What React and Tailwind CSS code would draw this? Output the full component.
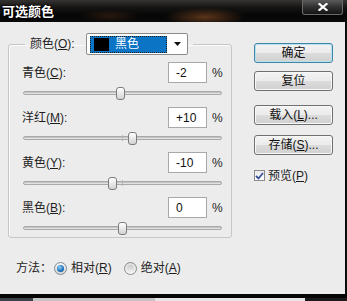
const rows = [
  { label: "青色", key: "C", value: -2, text: "-2" },
  { label: "洋红", key: "M", value: 10, text: "+10" },
  { label: "黄色", key: "Y", value: -10, text: "-10" },
  { label: "黑色", key: "B", value: 0, text: "0" },
];

function Slider({ value }) {
  return (
    <div className="relative h-[17px]">
      <div className="absolute left-[1px] right-0 top-[8px] h-[4px] rounded-[2px] border border-[#a9a9a9] bg-[#e2e2e2] shadow-[inset_0_1px_0_#c4c4c4]" />
      <div className="absolute left-[100px] top-[7px] w-[1px] h-[6px] bg-[#b5b5b5]" />
      <div
        className="absolute top-[4px] w-[9px] h-[13px] rounded-[3px] border border-[#7c7c7c] bg-[linear-gradient(to_bottom,#ffffff,#e9e9e9_50%,#d2d2d2)] shadow-[inset_0_1px_0_#fff]"
        style={{ left: `${96 + value}px` }}
      />
    </div>
  );
}

function Row({ label, k, text, value }) {
  return (
    <div className="mt-[7px]">
      <div className="flex items-center h-[21px]">
        <span className="flex-1 leading-[14px] text-[#1e1e1e]">
          {label}(<u className="underline-offset-[1px]">{k}</u>):
        </span>
        <div className="w-[39px] h-[21px] border border-[#a8a8a8] bg-white flex items-center pl-[7px] leading-[14px] text-[#111]">
          {text}
        </div>
        <span className="ml-[5px] w-[10px] leading-[14px] text-[#1e1e1e]">%</span>
      </div>
      <Slider value={value} />
    </div>
  );
}

function Button({ children, primary }) {
  return (
    <div
      className={
        "h-[20px] w-[79px] rounded-[3px] border flex items-center justify-center leading-[14px] text-[#111] bg-[linear-gradient(to_bottom,#f3f3f3,#ebebeb_50%,#dcdcdc_51%,#d0d0d0)] " +
        (primary
          ? "border-[#3d86a8] shadow-[inset_0_0_0_1px_#b9e0ee]"
          : "border-[#707070] shadow-[inset_0_0_0_1px_#f8f8f8]")
      }
    >
      {children}
    </div>
  );
}

export default function App() {
  return (
    <div className="w-[347px] h-[301px] flex flex-col overflow-hidden bg-[#0b0b0b] font-['Liberation_Sans','Noto_Sans_CJK_SC',sans-serif] text-[12px]">
      {/* title bar */}
      <div className="h-[22px] shrink-0 flex items-start justify-between bg-[image:radial-gradient(ellipse_40px_9px_at_205px_17px,rgba(160,90,40,0.55),transparent),radial-gradient(ellipse_30px_6px_at_110px_16px,rgba(110,60,30,0.35),transparent),linear-gradient(to_bottom,#353433,#151413_35%,#060606_70%,#0a0a0a)]">
        <span className="ml-[2px] mt-[3px] text-[13px] leading-[15px] font-bold text-white font-['Noto_Sans_CJK_SC',sans-serif] [text-shadow:0_0_2px_#000,0_0_2px_#000,1px_1px_1px_#000]">
          可选颜色
        </span>
        <div className="mr-[4px] w-[41px] h-[15px] rounded-b-[3px] border-x border-b border-[#6a6a6a] bg-[linear-gradient(to_bottom,#5b5b5b,#303030_50%,#151515)] flex items-center justify-center">
          <svg width="10" height="8" viewBox="0 0 10 8">
            <path d="M1.5 1 L8.5 7 M8.5 1 L1.5 7" stroke="#fff" strokeWidth="2.2" strokeLinecap="square" />
          </svg>
        </div>
      </div>

      {/* body */}
      <div className="h-[272px] shrink-0 mr-[2px] bg-[#ececec] flex">
        {/* left column */}
        <div className="ml-[8px] w-[224px] flex flex-col">
          <fieldset className="mt-[11px] w-[224px] border border-[#c7c7c7] rounded-[3px] pl-[13px] pr-[9px] pb-[2px] shadow-[inset_1px_1px_0_#fafafa]">
            <legend className="ml-[3px] px-[5px]">
              <div className="flex items-center h-[22px]">
                <span className="w-[56px] leading-[14px] text-[#1e1e1e]">
                  颜色(<u className="underline-offset-[1px]">O</u>):
                </span>
                <div className="w-[102px] h-[22px] border border-[#8a8a8a] rounded-[2px] bg-white flex items-center pl-[3px] pr-[6px]">
                  <div className="w-[77px] h-[17px] bg-[#0b74c5] border border-dotted border-[#202020] flex items-center pl-[3px]">
                    <div className="w-[15px] h-[13px] bg-black" />
                    <span className="ml-[6px] text-white leading-[14px]">黑色</span>
                  </div>
                  <div className="flex-1" />
                  <svg width="7" height="4" viewBox="0 0 7 4">
                    <path d="M0 0 H7 L3.5 4 Z" fill="#111" />
                  </svg>
                </div>
              </div>
            </legend>
            {rows.map((r) => (
              <Row key={r.key} label={r.label} k={r.key} text={r.text} value={r.value} />
            ))}
          </fieldset>

          {/* method */}
          <div className="mt-[22px] h-[16px] flex items-center pl-[8px] text-[#1e1e1e]">
            <span className="w-[38px] leading-[14px]">方法：</span>
            <div className="w-[13px] h-[13px] rounded-full border border-[#7e8a94] bg-[linear-gradient(to_bottom,#f4f4f4,#d4d4d4)] flex items-center justify-center">
              <div className="w-[7px] h-[7px] rounded-full bg-[radial-gradient(circle_at_40%_35%,#8fd3ff,#1b6fb6_60%,#0e4f8a)]" />
            </div>
            <span className="ml-[4px] leading-[14px]">
              相对(<u className="underline-offset-[1px]">R</u>)
            </span>
            <div className="ml-[12px] w-[13px] h-[13px] rounded-full border border-[#8c8c8c] bg-[linear-gradient(to_bottom,#dcdcdc,#f6f6f6)] flex items-center justify-center">
              <div className="w-[7px] h-[7px] rounded-full bg-[linear-gradient(to_bottom,#c8c8c8,#efefef)]" />
            </div>
            <span className="ml-[4px] leading-[14px]">
              绝对(<u className="underline-offset-[1px]">A</u>)
            </span>
          </div>
        </div>

        {/* right column */}
        <div className="ml-[22px] mt-[21px] w-[79px] flex flex-col">
          <Button primary>确定</Button>
          <div className="mt-[8px]">
            <Button>复位</Button>
          </div>
          <div className="mt-[14px]">
            <Button>
              载入(<u className="underline-offset-[1px]">L</u>)...
            </Button>
          </div>
          <div className="mt-[10px]">
            <Button>
              存储(<u className="underline-offset-[1px]">S</u>)...
            </Button>
          </div>
          <div className="mt-[14px] flex items-center h-[13px]">
            <div className="w-[11px] h-[11px] border border-[#8a8a8a] bg-[linear-gradient(to_bottom,#e9e9e9,#ffffff)] flex items-center justify-center">
              <svg width="9" height="8" viewBox="0 0 9 8">
                <path d="M1 4 L3.5 6.5 L8 1" stroke="#3a4f9a" strokeWidth="1.8" fill="none" />
              </svg>
            </div>
            <span className="ml-[3px] leading-[14px] text-[#1e1e1e]">
              预览(<u className="underline-offset-[1px]">P</u>)
            </span>
          </div>
        </div>
      </div>

      {/* bottom edge */}
      <div className="h-[4px] shrink-0 bg-[#060606]" />
      <div className="h-[3px] shrink-0 flex">
        <div className="w-[33px] bg-[#3b4149]" />
        <div className="w-[122px] bg-[#c4c4c4]" />
        <div className="w-[150px] bg-[#e6e6e6]" />
        <div className="flex-1 bg-[#1a1a1a]" />
      </div>
    </div>
  );
}
